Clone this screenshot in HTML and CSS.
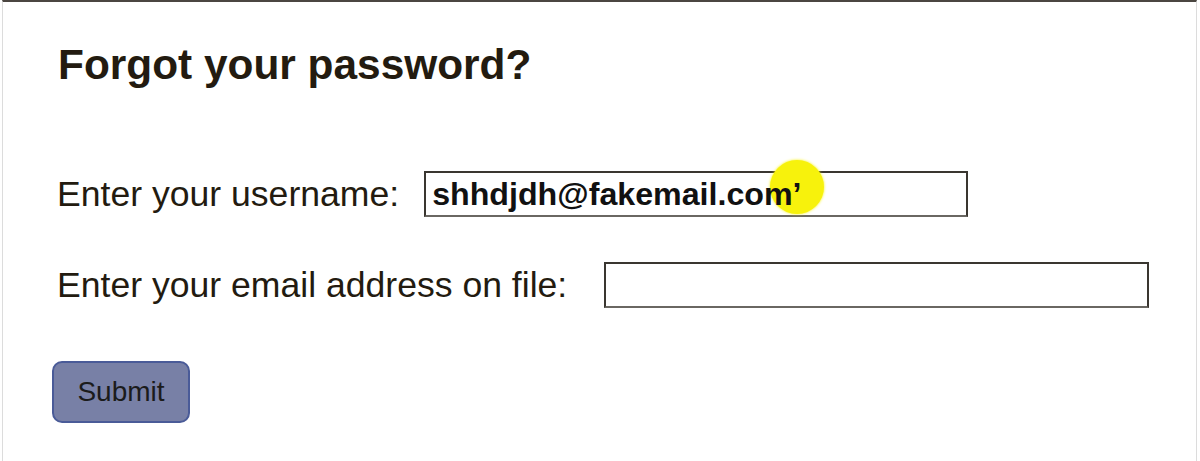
FILE: index.html
```html
<!DOCTYPE html>
<html>
<head>
<meta charset="utf-8">
<link rel="stylesheet" href="styles.css">
</head>
<body>
<div class="frame">
  <h1 class="title">Forgot your password?</h1>
  <div class="row row-user">
    <label class="label">Enter your username:</label>
    <div class="field field-user">
      <span class="highlight"></span>
      <span class="value">shhdjdh@fakemail.com’</span>
    </div>
  </div>
  <div class="row row-email">
    <label class="label">Enter your email address on file:</label>
    <div class="field field-email"></div>
  </div>
  <button class="submit">Submit</button>
</div>
</body>
</html>
```

FILE: styles.css
```css
html, body {
  margin: 0;
  padding: 0;
  background: #ffffff;
}
body {
  font-family: "Liberation Sans", Arial, sans-serif;
  color: #231b10;
  width: 1200px;
  height: 461px;
  overflow: hidden;
}
.frame {
  margin: 0 3px 0 2px;
  height: 461px;
  box-sizing: border-box;
  border-top: 2px solid #4b4641;
  border-left: 1px solid #dcdcdc;
  border-right: 1px solid #dcdcdc;
  padding: 38px 0 0 54px;
}
.title {
  margin: 0 0 0 1px;
  font-size: 42.4px;
  font-weight: bold;
  line-height: 50px;
}
.row {
  display: flex;
  align-items: center;
}
.row-user {
  margin-top: 81px;
}
.row-email {
  margin-top: 45px;
}
.label {
  font-size: 35.6px;
  line-height: 46px;
}
.row-user .label {
  margin-right: 25px;
}
.row-email .label {
  margin-right: 37px;
}
.field {
  position: relative;
  box-sizing: border-box;
  height: 46px;
  border: 2px solid #3a3630;
  border-bottom-color: #6a6762;
  background: #fff;
}
.field-user {
  width: 544px;
  padding-left: 6px;
  display: flex;
  align-items: center;
}
.field-email {
  width: 545px;
}
.value {
  position: relative;
  font-size: 32.2px;
  font-weight: bold;
  color: #111;
}
.highlight {
  position: absolute;
  left: 344px;
  top: -13px;
  width: 54px;
  height: 54px;
  border-radius: 50%;
  background: #f7f20c;
  box-shadow: 0 0 3px #f7f20c;
}
.submit {
  display: block;
  margin: 53px 0 0 -5px;
  width: 138px;
  height: 62px;
  border: 2px solid #4a5b98;
  border-radius: 10px;
  background: #7880a6;
  font-family: "Liberation Sans", Arial, sans-serif;
  font-size: 28px;
  color: #1b1b1b;
  padding: 0;
}
```
